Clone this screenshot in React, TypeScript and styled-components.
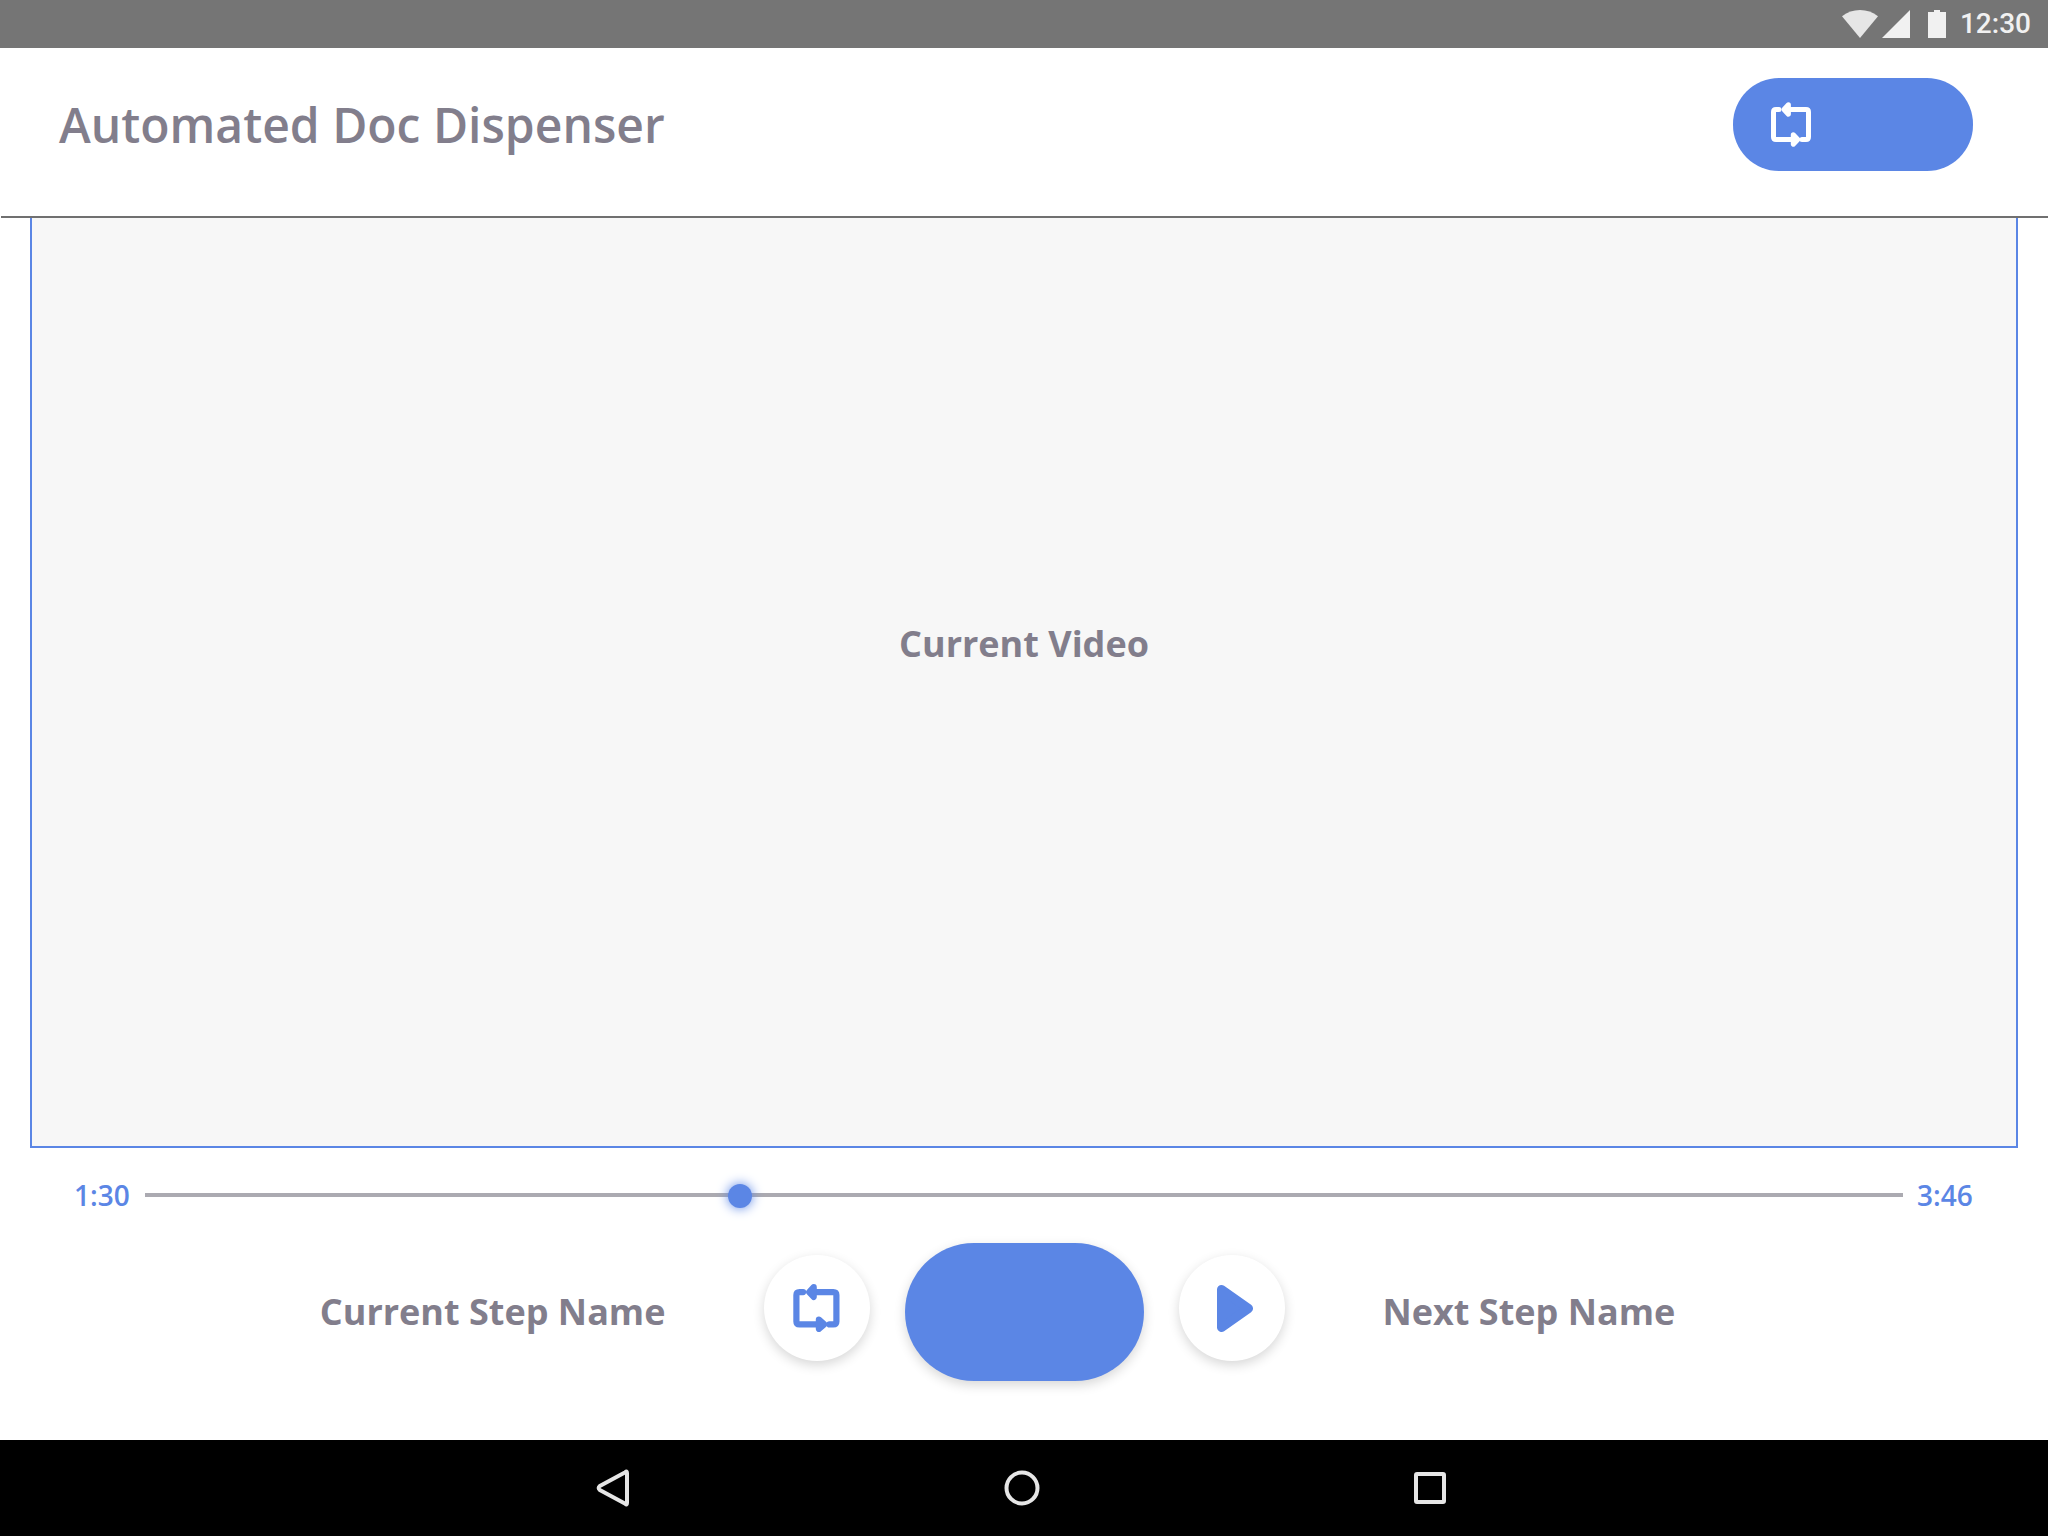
import React, { useState } from "react";
import styled, { createGlobalStyle } from "styled-components";

const blue = "#5b86e5";
const grey = "#827e8c";

const GlobalStyle = createGlobalStyle`
  * { box-sizing: border-box; }
  body {
    margin: 0;
    background: #fff;
    color: ${grey};
    font-family: "Open Sans", "Noto Sans", sans-serif;
  }
  button {
    margin: 0;
    padding: 0;
    border: 0;
    background: none;
    cursor: pointer;
  }
  svg { display: block; }
`;

const Screen = styled.div`
  display: flex;
  flex-direction: column;
  min-height: 100vh;
`;

const StatusBar = styled.div`
  display: flex;
  align-items: center;
  justify-content: flex-end;
  height: 48px;
  padding-right: 17px;
  background: #757575;
  color: #f1f1f1;
`;

const Clock = styled.time`
  margin-left: 12px;
  font: 500 28px/32px Roboto, sans-serif;
`;

const Header = styled.header`
  display: flex;
  align-items: center;
  justify-content: space-between;
  margin-left: 1px;
  padding: 30px 75px 45px 58px;
  border-bottom: 2px solid #707070;
`;

const Title = styled.h1`
  margin: 0;
  font-size: 48px;
  line-height: 64px;
  font-weight: 600;
`;

const RestartButton = styled.button`
  display: flex;
  align-items: center;
  width: 240px;
  height: 93px;
  padding-left: 38px;
  border-radius: 46px;
  background: ${blue};
`;

const Main = styled.main`
  display: flex;
  flex: 1;
  flex-direction: column;
`;

const Video = styled.section`
  display: flex;
  flex: 1;
  align-items: center;
  justify-content: center;
  margin: 0 30px;
  padding-bottom: 76px;
  border: solid ${blue};
  border-width: 0 2px 2px;
  background: #f7f7f7;
`;

const Label = styled.h2<{ $align?: string }>`
  margin: 0;
  font-size: 36px;
  line-height: 48px;
  font-weight: 700;
  text-align: ${(p) => p.$align || "center"};
`;

const Timeline = styled.div`
  display: grid;
  grid-template-columns: 57px 1fr 57px;
  align-items: center;
  gap: 14px;
  height: 40px;
  margin: 27px 74px 28px;
`;

const Time = styled.span`
  color: ${blue};
  font-size: 28px;
  line-height: 40px;
  font-weight: 600;
`;

const Seek = styled.input`
  appearance: none;
  width: 100%;
  height: 24px;
  margin: 0;
  background: none;

  &::-webkit-slider-runnable-track {
    height: 4px;
    background: #abaab1;
  }

  &::-webkit-slider-thumb {
    appearance: none;
    width: 24px;
    height: 24px;
    margin-top: -9px;
    border-radius: 50%;
    background: ${blue};
    box-shadow: 0 0 12px ${blue};
  }
`;

const Controls = styled.div`
  display: grid;
  grid-template-columns: 1fr auto 1fr;
  align-items: center;
  gap: 98px;
  margin-bottom: 59px;
`;

const Buttons = styled.div`
  display: flex;
  align-items: center;
  gap: 35px;
`;

const RoundButton = styled.button`
  display: flex;
  align-items: center;
  justify-content: center;
  width: 106px;
  height: 106px;
  margin-bottom: 8px;
  border-radius: 50%;
  background: #fff;
  box-shadow: 0 4px 12px rgba(0, 0, 0, 0.16);
`;

const MainButton = styled.button`
  width: 239px;
  height: 138px;
  border-radius: 69px;
  background: ${blue};
  box-shadow: 0 4px 12px rgba(0, 0, 0, 0.16);
`;

const NavBar = styled.nav`
  display: flex;
  justify-content: center;
  height: 96px;
  padding-right: 5px;
  background: #000;
`;

const NavButton = styled.button`
  display: flex;
  align-items: center;
  justify-content: center;
  width: 20%;
`;

const StatusIcons = () => (
  <svg width="106" height="28" viewBox="0 0 106 28" aria-hidden="true">
    <path d="M0 6.2Q8 0 18 0T36 6.2L18 28Z" fill="#e6e6e6" />
    <path d="M40 28H68V0Z" fill="#f1f1f1" />
    <path d="M86 2h6V0h6v2h6v26H86z" fill="#f1f1f1" />
  </svg>
);

const RestartIcon = () => (
  <svg width="40" height="45" viewBox="0 0 40 45" fill="none" stroke="#fff" strokeWidth="5" strokeLinecap="round" strokeLinejoin="round" aria-hidden="true">
    <path d="M8 7.5H5Q2.5 7.5 2.5 10V35Q2.5 37.5 5 37.5H24" />
    <path d="M15 7.5H35Q37.5 7.5 37.5 10V35Q37.5 37.5 35 37.5H31" />
    <path d="M17.4 2.8L13 7.5L17.4 12.2Z" fill="#fff" />
    <path d="M22.3 32.8L26.8 37.5L22.3 42.2Z" fill="#fff" />
  </svg>
);

const RepeatIcon = () => (
  <svg width="47" height="48" viewBox="0 0 47 48" fill="none" stroke={blue} strokeWidth="6.2" strokeLinecap="round" strokeLinejoin="round" aria-hidden="true">
    <path d="M10.1 8.1H6.5Q3.4 8.1 3.4 11V37.5Q3.4 40.4 6.5 40.4H27" />
    <path d="M18 8.1H40.3Q43.4 8.1 43.4 11V37.5Q43.4 40.4 40.3 40.4H36.5" />
    <path d="M20.7 3.2L16.2 8.1L20.7 13Z" fill={blue} />
    <path d="M25.9 35.5L31.2 40.4L25.9 45Z" fill={blue} />
  </svg>
);

const PlayIcon = () => (
  <svg width="42" height="47" viewBox="0 0 42 47" aria-hidden="true">
    <path d="M10.5 4.5L37.5 23.5L10.5 42.5Z" fill={blue} stroke={blue} strokeWidth="9" strokeLinejoin="round" />
  </svg>
);

const navIcons = [
  { name: "Back", shape: <path d="M34 5V35Q34 37.5 32.3 35.8L6.8 22Q4.5 20 6.8 18L32.3 4.2Q34 2.5 34 5Z" /> },
  { name: "Home", shape: <circle cx="20" cy="20" r="15.5" /> },
  { name: "Overview", shape: <rect x="6" y="6" width="28" height="28" rx="1" /> },
];

export default function App() {
  const [position, setPosition] = useState(76);
  return (
    <Screen>
      <GlobalStyle />
      <StatusBar>
        <StatusIcons />
        <Clock>12:30</Clock>
      </StatusBar>
      <Header>
        <Title>Automated Doc Dispenser</Title>
        <RestartButton type="button" aria-label="Restart">
          <RestartIcon />
        </RestartButton>
      </Header>
      <Main>
        <Video>
          <Label>Current Video</Label>
        </Video>
        <Timeline>
          <Time>1:30</Time>
          <Seek
            type="range"
            aria-label="Video position"
            min={0}
            max={226}
            value={position}
            onChange={(e) => setPosition(Number(e.target.value))}
          />
          <Time>3:46</Time>
        </Timeline>
        <Controls>
          <Label $align="right">Current Step Name</Label>
          <Buttons>
            <RoundButton type="button" aria-label="Repeat step">
              <RepeatIcon />
            </RoundButton>
            <MainButton type="button" aria-label="Pause" />
            <RoundButton type="button" aria-label="Play next step">
              <PlayIcon />
            </RoundButton>
          </Buttons>
          <Label $align="left">Next Step Name</Label>
        </Controls>
      </Main>
      <NavBar>
        {navIcons.map(({ name, shape }) => (
          <NavButton key={name} type="button" aria-label={name}>
            <svg width="40" height="40" viewBox="0 0 40 40" fill="none" stroke="#e6e6e6" strokeWidth="4" strokeLinejoin="round" aria-hidden="true">
              {shape}
            </svg>
          </NavButton>
        ))}
      </NavBar>
    </Screen>
  );
}
